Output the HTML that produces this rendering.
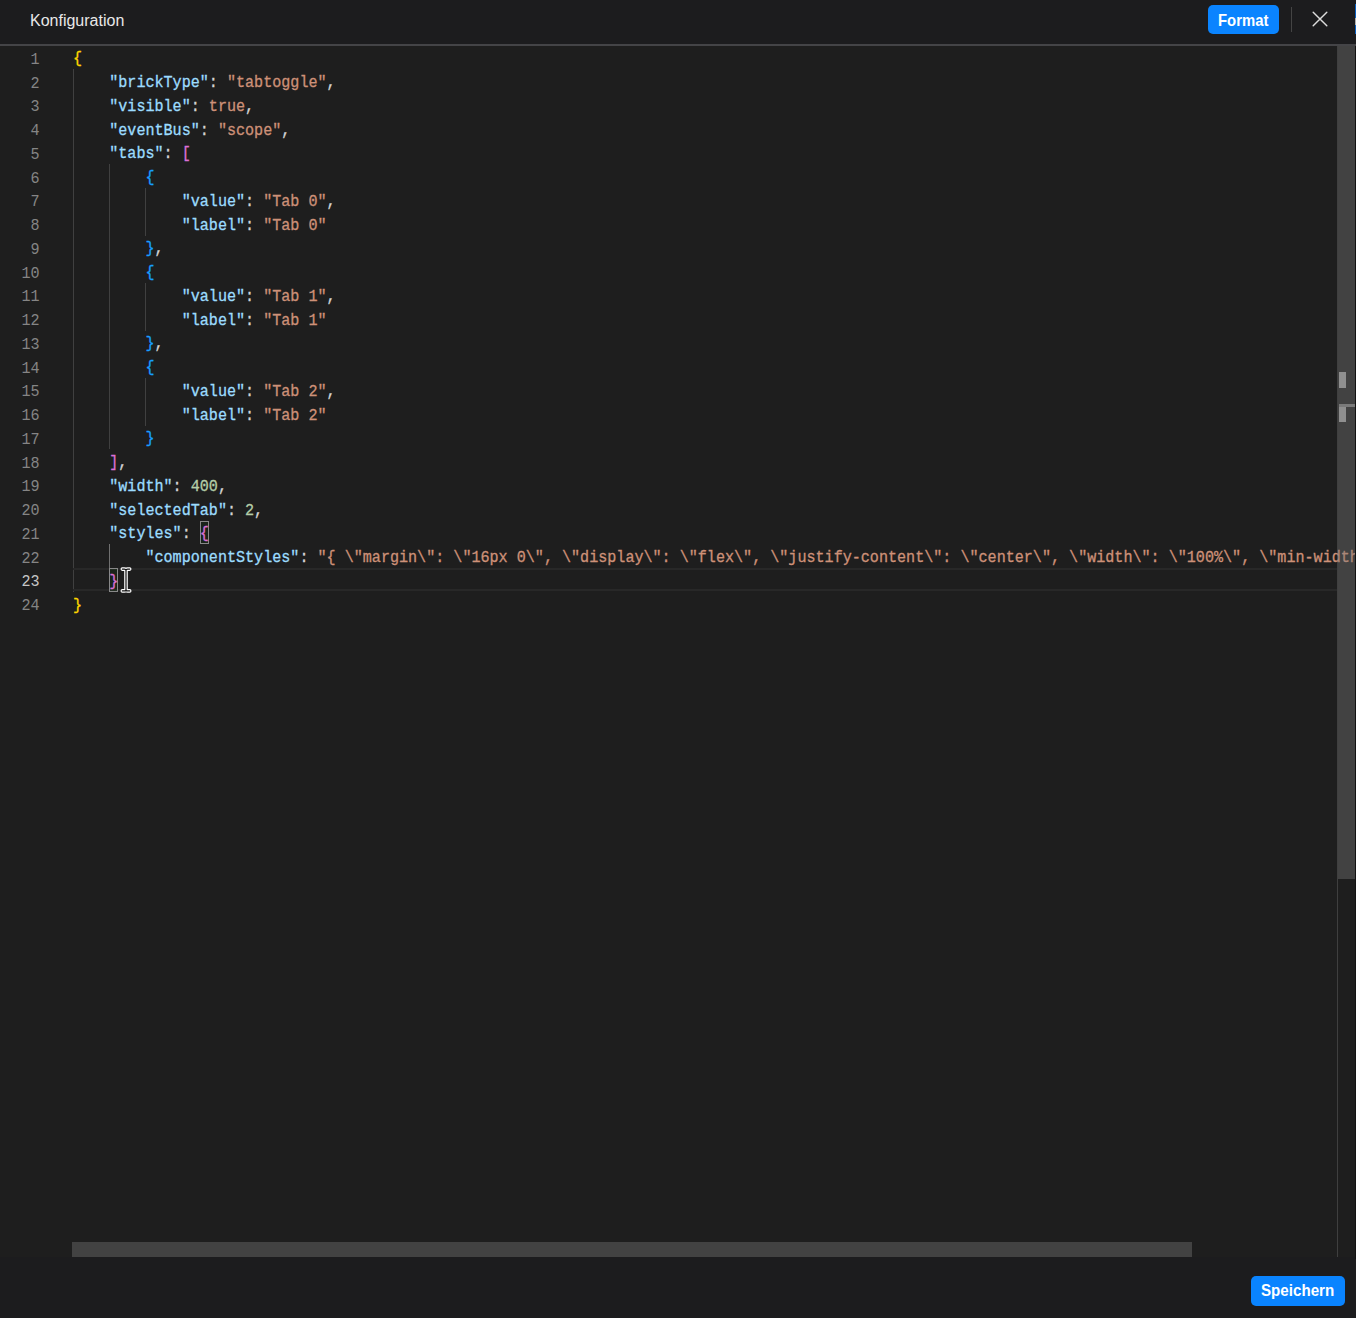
<!DOCTYPE html>
<html><head><meta charset="utf-8"><style>
html,body{margin:0;padding:0;}
body{width:1356px;height:1318px;background:#1c1c1e;position:relative;overflow:hidden;font-family:"Liberation Sans",sans-serif;}
#hdr{position:absolute;left:0;top:0;width:1356px;height:44px;background:#1c1c1e;}
#title{position:absolute;left:30px;top:8px;font-size:16px;line-height:26px;color:#e8e8e8;}
.btn{position:absolute;background:#0a84ff;color:#fff;font-weight:bold;font-size:15px;border-radius:5px;text-align:center;}
#hline{position:absolute;left:0;top:44px;width:1356px;height:1.75px;background:#444447;}
#ed{position:absolute;left:0;top:46.25px;width:1355px;height:1211px;background:#1e1e1e;overflow:hidden;}
#code{position:absolute;left:0;top:-46.25px;width:1355px;height:1318px;}
.ln{position:absolute;left:0;width:39.5px;text-align:right;font-family:"Liberation Mono",monospace;font-size:16px;line-height:23.75px;height:23.75px;transform:scaleX(0.9431);transform-origin:39.5px 0;}
.cl{position:absolute;left:72.5px;white-space:pre;-webkit-text-stroke:0.3px currentColor;font-family:"Liberation Mono",monospace;font-size:16px;line-height:23.75px;height:23.75px;color:#d4d4d4;transform:scaleX(0.9431);transform-origin:0 0;}
</style></head><body>
<div id="hdr">
  <div id="title">Konfiguration</div>
  <div class="btn" style="left:1207.6px;top:5.4px;width:71px;height:28.4px;"><span style="position:absolute;left:10.2px;top:4.9px;font-size:16.5px;line-height:20px;transform:scaleX(0.9);transform-origin:0 0;white-space:nowrap">Format</span></div>
  <div style="position:absolute;left:1291px;top:7px;width:1.25px;height:25px;background:#444"></div>
  <svg style="position:absolute;left:1311px;top:10.2px" width="18" height="18" viewBox="0 0 18 18"><path d="M2.2 2.2L15.8 15.8M15.8 2.2L2.2 15.8" stroke="#dcdcdc" stroke-width="1.45" stroke-linecap="round"/></svg>
  <div style="position:absolute;left:1355px;top:4px;width:1px;height:30px;background:linear-gradient(#0a5fc0 0,#0a5fc0 13.6px,#b0b0b0 13.6px,#b0b0b0 21px,#0a5fc0 21px)"></div>
</div>
<div id="hline"></div>
<div id="ed"><div id="code">
<div style="position:absolute;left:73.00px;top:69.25px;width:1px;height:522.50px;background:#404040"></div>
<div style="position:absolute;left:109.22px;top:164.25px;width:1px;height:285.00px;background:#404040"></div>
<div style="position:absolute;left:109.22px;top:544.25px;width:1px;height:23.75px;background:#707070"></div>
<div style="position:absolute;left:145.44px;top:188.00px;width:1px;height:47.50px;background:#404040"></div>
<div style="position:absolute;left:145.44px;top:283.00px;width:1px;height:47.50px;background:#404040"></div>
<div style="position:absolute;left:145.44px;top:378.00px;width:1px;height:47.50px;background:#404040"></div>
<div style="position:absolute;left:73.00px;top:568.2px;width:1264.00px;height:23.1px;box-sizing:border-box;border-top:2px solid #282828;border-bottom:2px solid #282828"></div>
<div style="position:absolute;left:199.77px;top:520.50px;width:9.05px;height:23.55px;box-sizing:border-box;border:1.25px solid #888;background:rgba(0,100,0,0.1)"></div>
<div style="position:absolute;left:109.22px;top:568.00px;width:9.05px;height:23.55px;box-sizing:border-box;border:1.25px solid #888;background:rgba(0,100,0,0.1)"></div>
<div class="ln" style="top:48.75px;color:#858585">1</div>
<div class="ln" style="top:72.50px;color:#858585">2</div>
<div class="ln" style="top:96.25px;color:#858585">3</div>
<div class="ln" style="top:120.00px;color:#858585">4</div>
<div class="ln" style="top:143.75px;color:#858585">5</div>
<div class="ln" style="top:167.50px;color:#858585">6</div>
<div class="ln" style="top:191.25px;color:#858585">7</div>
<div class="ln" style="top:215.00px;color:#858585">8</div>
<div class="ln" style="top:238.75px;color:#858585">9</div>
<div class="ln" style="top:262.50px;color:#858585">10</div>
<div class="ln" style="top:286.25px;color:#858585">11</div>
<div class="ln" style="top:310.00px;color:#858585">12</div>
<div class="ln" style="top:333.75px;color:#858585">13</div>
<div class="ln" style="top:357.50px;color:#858585">14</div>
<div class="ln" style="top:381.25px;color:#858585">15</div>
<div class="ln" style="top:405.00px;color:#858585">16</div>
<div class="ln" style="top:428.75px;color:#858585">17</div>
<div class="ln" style="top:452.50px;color:#858585">18</div>
<div class="ln" style="top:476.25px;color:#858585">19</div>
<div class="ln" style="top:500.00px;color:#858585">20</div>
<div class="ln" style="top:523.75px;color:#858585">21</div>
<div class="ln" style="top:547.50px;color:#858585">22</div>
<div class="ln" style="top:571.25px;color:#c6c6c6">23</div>
<div class="ln" style="top:595.00px;color:#858585">24</div>
<div class="cl" style="top:48.25px"><span style="color:#ffd700;-webkit-text-stroke:0.3px #ffd700">{</span></div>
<div class="cl" style="top:72.00px">    <span style="color:#9cdcfe;-webkit-text-stroke:0.3px #9cdcfe">&quot;brickType&quot;</span><span style="color:#d4d4d4;-webkit-text-stroke:0.3px #d4d4d4">: </span><span style="color:#ce9178;-webkit-text-stroke:0.3px #ce9178">&quot;tabtoggle&quot;</span><span style="color:#d4d4d4;-webkit-text-stroke:0.3px #d4d4d4">,</span></div>
<div class="cl" style="top:95.75px">    <span style="color:#9cdcfe;-webkit-text-stroke:0.3px #9cdcfe">&quot;visible&quot;</span><span style="color:#d4d4d4;-webkit-text-stroke:0.3px #d4d4d4">: </span><span style="color:#ce9178;-webkit-text-stroke:0.3px #ce9178">true</span><span style="color:#d4d4d4;-webkit-text-stroke:0.3px #d4d4d4">,</span></div>
<div class="cl" style="top:119.50px">    <span style="color:#9cdcfe;-webkit-text-stroke:0.3px #9cdcfe">&quot;eventBus&quot;</span><span style="color:#d4d4d4;-webkit-text-stroke:0.3px #d4d4d4">: </span><span style="color:#ce9178;-webkit-text-stroke:0.3px #ce9178">&quot;scope&quot;</span><span style="color:#d4d4d4;-webkit-text-stroke:0.3px #d4d4d4">,</span></div>
<div class="cl" style="top:143.25px">    <span style="color:#9cdcfe;-webkit-text-stroke:0.3px #9cdcfe">&quot;tabs&quot;</span><span style="color:#d4d4d4;-webkit-text-stroke:0.3px #d4d4d4">: </span><span style="color:#da70d6;-webkit-text-stroke:0.3px #da70d6">[</span></div>
<div class="cl" style="top:167.00px">        <span style="color:#179fff;-webkit-text-stroke:0.3px #179fff">{</span></div>
<div class="cl" style="top:190.75px">            <span style="color:#9cdcfe;-webkit-text-stroke:0.3px #9cdcfe">&quot;value&quot;</span><span style="color:#d4d4d4;-webkit-text-stroke:0.3px #d4d4d4">: </span><span style="color:#ce9178;-webkit-text-stroke:0.3px #ce9178">&quot;Tab 0&quot;</span><span style="color:#d4d4d4;-webkit-text-stroke:0.3px #d4d4d4">,</span></div>
<div class="cl" style="top:214.50px">            <span style="color:#9cdcfe;-webkit-text-stroke:0.3px #9cdcfe">&quot;label&quot;</span><span style="color:#d4d4d4;-webkit-text-stroke:0.3px #d4d4d4">: </span><span style="color:#ce9178;-webkit-text-stroke:0.3px #ce9178">&quot;Tab 0&quot;</span></div>
<div class="cl" style="top:238.25px">        <span style="color:#179fff;-webkit-text-stroke:0.3px #179fff">}</span><span style="color:#d4d4d4;-webkit-text-stroke:0.3px #d4d4d4">,</span></div>
<div class="cl" style="top:262.00px">        <span style="color:#179fff;-webkit-text-stroke:0.3px #179fff">{</span></div>
<div class="cl" style="top:285.75px">            <span style="color:#9cdcfe;-webkit-text-stroke:0.3px #9cdcfe">&quot;value&quot;</span><span style="color:#d4d4d4;-webkit-text-stroke:0.3px #d4d4d4">: </span><span style="color:#ce9178;-webkit-text-stroke:0.3px #ce9178">&quot;Tab 1&quot;</span><span style="color:#d4d4d4;-webkit-text-stroke:0.3px #d4d4d4">,</span></div>
<div class="cl" style="top:309.50px">            <span style="color:#9cdcfe;-webkit-text-stroke:0.3px #9cdcfe">&quot;label&quot;</span><span style="color:#d4d4d4;-webkit-text-stroke:0.3px #d4d4d4">: </span><span style="color:#ce9178;-webkit-text-stroke:0.3px #ce9178">&quot;Tab 1&quot;</span></div>
<div class="cl" style="top:333.25px">        <span style="color:#179fff;-webkit-text-stroke:0.3px #179fff">}</span><span style="color:#d4d4d4;-webkit-text-stroke:0.3px #d4d4d4">,</span></div>
<div class="cl" style="top:357.00px">        <span style="color:#179fff;-webkit-text-stroke:0.3px #179fff">{</span></div>
<div class="cl" style="top:380.75px">            <span style="color:#9cdcfe;-webkit-text-stroke:0.3px #9cdcfe">&quot;value&quot;</span><span style="color:#d4d4d4;-webkit-text-stroke:0.3px #d4d4d4">: </span><span style="color:#ce9178;-webkit-text-stroke:0.3px #ce9178">&quot;Tab 2&quot;</span><span style="color:#d4d4d4;-webkit-text-stroke:0.3px #d4d4d4">,</span></div>
<div class="cl" style="top:404.50px">            <span style="color:#9cdcfe;-webkit-text-stroke:0.3px #9cdcfe">&quot;label&quot;</span><span style="color:#d4d4d4;-webkit-text-stroke:0.3px #d4d4d4">: </span><span style="color:#ce9178;-webkit-text-stroke:0.3px #ce9178">&quot;Tab 2&quot;</span></div>
<div class="cl" style="top:428.25px">        <span style="color:#179fff;-webkit-text-stroke:0.3px #179fff">}</span></div>
<div class="cl" style="top:452.00px">    <span style="color:#da70d6;-webkit-text-stroke:0.3px #da70d6">]</span><span style="color:#d4d4d4;-webkit-text-stroke:0.3px #d4d4d4">,</span></div>
<div class="cl" style="top:475.75px">    <span style="color:#9cdcfe;-webkit-text-stroke:0.3px #9cdcfe">&quot;width&quot;</span><span style="color:#d4d4d4;-webkit-text-stroke:0.3px #d4d4d4">: </span><span style="color:#b5cea8;-webkit-text-stroke:0.3px #b5cea8">400</span><span style="color:#d4d4d4;-webkit-text-stroke:0.3px #d4d4d4">,</span></div>
<div class="cl" style="top:499.50px">    <span style="color:#9cdcfe;-webkit-text-stroke:0.3px #9cdcfe">&quot;selectedTab&quot;</span><span style="color:#d4d4d4;-webkit-text-stroke:0.3px #d4d4d4">: </span><span style="color:#b5cea8;-webkit-text-stroke:0.3px #b5cea8">2</span><span style="color:#d4d4d4;-webkit-text-stroke:0.3px #d4d4d4">,</span></div>
<div class="cl" style="top:523.25px">    <span style="color:#9cdcfe;-webkit-text-stroke:0.3px #9cdcfe">&quot;styles&quot;</span><span style="color:#d4d4d4;-webkit-text-stroke:0.3px #d4d4d4">: </span><span style="color:#da70d6;-webkit-text-stroke:0.3px #da70d6">{</span></div>
<div class="cl" style="top:547.00px">        <span style="color:#9cdcfe;-webkit-text-stroke:0.3px #9cdcfe">&quot;componentStyles&quot;</span><span style="color:#d4d4d4;-webkit-text-stroke:0.3px #d4d4d4">: </span><span style="color:#ce9178;-webkit-text-stroke:0.3px #ce9178">&quot;{ \&quot;margin\&quot;: \&quot;16px 0\&quot;, \&quot;display\&quot;: \&quot;flex\&quot;, \&quot;justify-content\&quot;: \&quot;center\&quot;, \&quot;width\&quot;: \&quot;100%\&quot;, \&quot;min-width\&quot;: \&quot;400px\&quot; }&quot;</span></div>
<div class="cl" style="top:570.75px">    <span style="color:#da70d6;-webkit-text-stroke:0.3px #da70d6">}</span></div>
<div class="cl" style="top:594.50px"><span style="color:#ffd700;-webkit-text-stroke:0.3px #ffd700">}</span></div>
</div>
  <!-- vertical scrollbar -->
  <div style="position:absolute;left:1337px;top:0;width:1.25px;height:1211px;background:rgba(127,127,127,0.35)"></div>
  <div style="position:absolute;left:1338px;top:0;width:17px;height:833px;background:rgba(121,121,121,0.4)"></div>
  <div style="position:absolute;left:1339px;top:325.75px;width:7px;height:16px;background:#8f8f8f"></div>
  <div style="position:absolute;left:1339px;top:358.35px;width:7px;height:17px;background:#8f8f8f"></div>
  <div style="position:absolute;left:1339px;top:358.05px;width:16px;height:2.5px;background:#7a7a7a"></div>
  <!-- horizontal scrollbar -->
  <div style="position:absolute;left:72.4px;top:1195.55px;width:1120px;height:15px;background:rgba(121,121,121,0.4)"></div>
</div>
<div style="position:absolute;left:1355px;top:46px;width:1px;height:1213px;background:#121212"></div>
<!-- mouse I-beam -->
<svg style="position:absolute;left:118px;top:565px" width="18" height="30" viewBox="0 0 18 30">
 <path d="M4.3 4.1H6.3C7.5 4.1 8 4.5 8 5.6C8 4.5 8.5 4.1 9.7 4.1H11.7M8 5.6V24.4M4.3 25.9H6.3C7.5 25.9 8 25.5 8 24.4C8 25.5 8.5 25.9 9.7 25.9H11.7" fill="none" stroke="#fff" stroke-width="3.6" stroke-linecap="round" stroke-linejoin="round"/>
 <path d="M4.3 4.1H6.3C7.5 4.1 8 4.5 8 5.6C8 4.5 8.5 4.1 9.7 4.1H11.7M8 5.6V24.4M4.3 25.9H6.3C7.5 25.9 8 25.5 8 24.4C8 25.5 8.5 25.9 9.7 25.9H11.7" fill="none" stroke="#111" stroke-width="1.2" stroke-linecap="round" stroke-linejoin="round"/>
</svg>
<div class="btn" style="left:1251.2px;top:1275.6px;width:93.7px;height:30px;"><span style="position:absolute;left:10.2px;top:4.7px;font-size:16.5px;line-height:20px;transform:scaleX(0.918);transform-origin:0 0;white-space:nowrap">Speichern</span></div>
</body></html>
